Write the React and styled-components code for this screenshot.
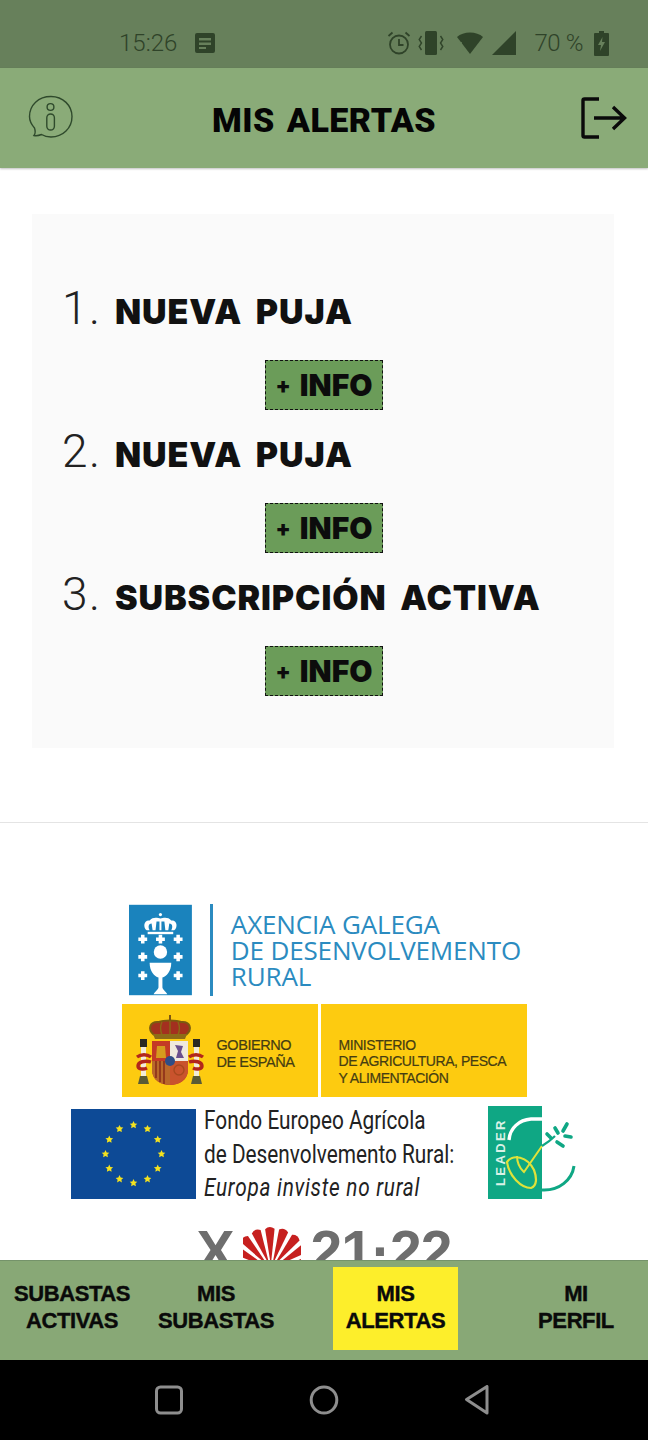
import React from 'react';
import styled, { createGlobalStyle } from 'styled-components';

const GlobalStyle = createGlobalStyle`
  html, body { margin: 0; padding: 0; background: #fff; }
  * { box-sizing: border-box; }
`;

const Screen = styled.div`
  width: 648px;
  height: 1440px;
  display: flex;
  flex-direction: column;
  overflow: hidden;
  font-family: "Roboto", "Liberation Sans", sans-serif;
`;

const StatusBar = styled.div`
  height: 68px;
  flex: none;
  background: #67805b;
  color: #2f4329;
  display: flex;
  align-items: center;
  padding: 18px 39px 0 119px;
`;
const StatusText = styled.span`
  font-size: 24px;
  font-weight: 300;
  line-height: 30px;
  letter-spacing: ${p => p.$spacing || 0};
  margin-left: ${p => p.$left || 0}px;
`;
const NoteIcon = styled.svg`
  margin-left: 17px;
`;
const StatusGlyph = styled.svg`
  flex: none;
  margin-left: ${p => p.$left || 0}px;
`;
const StatusIcons = styled.div`
  margin-left: auto;
  display: flex;
  align-items: center;
`;

const Header = styled.header`
  height: 100px;
  flex: none;
  background: #8aab78;
  box-shadow: 0 1px 2px rgba(0, 0, 0, 0.25);
  display: flex;
  align-items: center;
  justify-content: space-between;
  padding: 0 21px 0 28px;
  position: relative;
`;
const Title = styled.h1`
  margin: 4px 7px 0 0;
  font-family: "Roboto", sans-serif;
  font-size: 34px;
  font-weight: 900;
  color: #050505;
  letter-spacing: 0.5px;
  word-spacing: 3px;
`;

const Main = styled.main`
  flex: 1;
  min-height: 0;
  overflow: hidden;
  background: #fff;
  padding-top: 46px;
`;
const Panel = styled.ol`
  list-style: none;
  margin: 0 34px 0 32px;
  height: 534px;
  padding: 69px 29px 0 31px;
  background: #fafafa;
`;
const Alert = styled.li`
  height: 143px;
  display: flex;
  flex-direction: column;
`;
const AlertRow = styled.div`
  height: 56px;
  display: flex;
  align-items: center;
`;
const AlertNumber = styled.span`
  width: 53px;
  flex: none;
  margin: 0 0 6px -1px;
  font-family: "Roboto", sans-serif;
  font-size: 46px;
  font-weight: 300;
  letter-spacing: 1.5px;
  color: #222;
`;
const AlertLabel = styled.span`
  font-family: "Inter", sans-serif;
  font-size: 34px;
  font-weight: 900;
  color: #111;
  letter-spacing: 0.9px;
  word-spacing: 6px;
  white-space: nowrap;
`;
const InfoButton = styled.button`
  align-self: center;
  margin-top: 21px;
  width: 118px;
  height: 50px;
  padding: 0;
  border: 1.5px dashed #111;
  background: #6b9c59;
  color: #0c0c0c;
  font-family: "Inter", sans-serif;
  font-size: 30px;
  font-weight: 900;
  display: flex;
  align-items: center;
  justify-content: center;
  gap: 9px;
`;
const Plus = styled.span`
  font-size: 22px;
`;

const Divider = styled.hr`
  margin: 74px 0 0;
  border: 0;
  border-top: 1px solid #e4e4e4;
`;

const Logos = styled.section`
  margin-top: 81px;
  display: flex;
  flex-direction: column;
  align-items: center;
`;
const AgencyRow = styled.div`
  display: flex;
  align-items: stretch;
  height: 92px;
  width: 392px;
  margin-left: 2px;
`;
const AgencyRule = styled.div`
  width: 3px;
  margin: 0 18px;
  background: #2b8bc0;
`;
const AgencyName = styled.div`
  font-family: "Open Sans", sans-serif;
  font-size: 26px;
  line-height: 26px;
  letter-spacing: -0.15px;
  color: #2b8bc0;
  padding-top: 7px;
  white-space: nowrap;
`;
const GovRow = styled.div`
  margin-top: 8px;
  display: flex;
  gap: 3px;
  height: 93px;
`;
const GovBox = styled.div`
  width: ${p => p.$width}px;
  background: #fdcb10;
  display: flex;
  align-items: center;
  padding: ${p => p.$top || 0}px 0 0 ${p => p.$pad}px;
  color: #453d12;
  font-family: "Liberation Sans", sans-serif;
  font-size: ${p => p.$size}px;
  letter-spacing: ${p => p.$spacing}px;
  line-height: 16.5px;
  white-space: nowrap;
  -webkit-text-stroke: 0.2px #453d12;
`;
const GovCrest = styled.svg`
  margin: ${p => -(p.$lift || 0)}px 12px 0 0;
  flex: none;
`;
const FundRow = styled.div`
  margin-top: 9px;
  width: 506px;
  height: 94px;
  display: flex;
`;
const FlagMark = styled.svg`
  flex: none;
  margin-top: 3px;
`;
const FundText = styled.div`
  width: 251px;
  margin: -2px 0 0 8px;
  font-family: "Roboto", sans-serif;
  font-size: 26px;
  line-height: 33.5px;
  color: #222;
  white-space: nowrap;
  transform: scaleX(0.8);
  transform-origin: left top;
  em {
    font-style: italic;
    letter-spacing: 0.9px;
  }
`;
const Leader = styled.svg`
  margin-left: auto;
  flex: none;
`;
const XacobeoRow = styled.div`
  margin-top: 23px;
  display: flex;
  align-items: flex-start;
  font-family: "Liberation Sans", sans-serif;
  font-weight: 700;
  font-size: 57px;
  line-height: 57px;
  letter-spacing: -1px;
  color: #6e6e6e;
`;
const Shell = styled.svg`
  margin: 0 10px 0 9px;
`;

const Tabs = styled.nav`
  height: 100px;
  flex: none;
  background: #88a876;
  border-top: 1px solid #75936a;
  display: grid;
  grid-template-columns: 144px 144px 216px 144px;
`;
const Tab = styled.div`
  justify-self: center;
  align-self: start;
  margin: 6px ${p => (p.$active ? '1px' : '0')} 0 0;
  height: 83px;
  width: ${p => (p.$active ? '125px' : 'auto')};
  background: ${p => (p.$active ? '#fdee2b' : 'transparent')};
  display: flex;
  align-items: center;
  justify-content: center;
  text-align: center;
  font-family: "Liberation Sans", sans-serif;
  font-size: 22px;
  font-weight: 700;
  line-height: 27.5px;
  letter-spacing: -0.4px;
  color: #0a0a0a;
  -webkit-text-stroke: 0.4px #0a0a0a;
  padding-bottom: 3px;
`;

const SystemNav = styled.div`
  height: 80px;
  flex: none;
  background: #000;
  display: flex;
  align-items: center;
  justify-content: center;
  gap: 125px;
  padding-right: 4px;
`;

const InfoBubble = () => (
  <svg width="46" height="46" viewBox="0 0 46 46" fill="none" stroke="#2f4a2c" strokeWidth="1.4">
    <path d="M6 40.5 C8 38 7.5 36 6.5 33 C3 29 1.5 25 1.5 21.5 C1.5 10 10.5 1.5 23 1.5 C35 1.5 44 10.5 44 21.5 C44 33 35 42 23 42 C19 42 16 41 13.5 39.5 C11 40.5 8.5 41 6 40.5 Z" />
    <circle cx="22.5" cy="12" r="3.4" />
    <rect x="18.8" y="19" width="7.6" height="16" rx="3.8" />
  </svg>
);

const LogoutIcon = () => (
  <svg width="46" height="42" viewBox="0 0 46 42" fill="none" stroke="#0a0a0a" strokeWidth="3.4">
    <path d="M18 2 H3.5 Q2 2 2 3.5 V38.5 Q2 40 3.5 40 H18" />
    <path d="M13 21 H43 M32 10 L43.5 21 L32 32" />
  </svg>
);

const crossPoints = [[14, 35], [32, 35], [50, 35], [14, 53], [50, 53], [14, 72], [50, 72]];

const GaliciaEmblem = () => (
  <svg width="64" height="92" viewBox="0 0 64 92">
    <rect width="64" height="92" fill="#1a83bd" />
    <g fill="#fff">
      <circle cx="32" cy="10" r="1.6" />
      <path d="M18 26 C14 23 15 15 21 16 C24 12 29 13 32 14 C35 13 40 12 43 16 C49 15 50 23 46 26 H43 C45 22 44 19 41 19 L40 26 H37 L36 17 H33 V26 H31 V17 H28 L27 26 H24 L23 19 C20 19 19 22 21 26 Z" />
      <rect x="19" y="27.5" width="26" height="2.4" />
      {crossPoints.map(([x, y]) => (
        <path key={`${x}-${y}`} d={`M${x - 1.8} ${y - 4.5} h3.6 v2.7 h2.7 v3.6 h-2.7 v2.7 h-3.6 v-2.7 h-2.7 v-3.6 h2.7 Z`} />
      ))}
      <circle cx="32" cy="48" r="6.8" />
      <path d="M21 59 H43 C43 68 38 73 34 74 V84 C34 86 37 88 39 91 H25 C27 88 30 86 30 84 V74 C26 73 21 68 21 59 Z" />
    </g>
  </svg>
);

const SpainCrest = () => (
  <GovCrest $lift={4} width="70" height="74" viewBox="0 0 70 74">
    <path d="M35 0 V8" stroke="#6e4a12" strokeWidth="1.8" />
    <path d="M19 20 C12 14 15 6 24 7 C28 5 42 5 46 7 C55 6 58 14 51 20 Z" fill="#a3301f" />
    <path d="M19 20 C12 14 15 6 24 7 C28 5 42 5 46 7 C55 6 58 14 51 20" fill="none" stroke="#7a5a10" strokeWidth="2" />
    <path d="M27 7 C25 11 25 15 27 20 M43 7 C45 11 45 15 43 20 M35 6 V20" fill="none" stroke="#8a6a14" strokeWidth="1.4" />
    <path d="M18 19 H52 L50 24 H20 Z" fill="#8d6b17" />
    <rect x="5" y="24" width="7" height="8" fill="#2a2a22" />
    <rect x="58" y="24" width="7" height="8" fill="#2a2a22" />
    <rect x="6" y="32" width="5" height="29" fill="#f2ecd9" />
    <rect x="59" y="32" width="5" height="29" fill="#f2ecd9" />
    <path d="M3 69 L5 61 H12 L14 69 Z" fill="#5a5a36" />
    <path d="M56 69 L58 61 H65 L67 69 Z" fill="#5a5a36" />
    <path d="M2 42 C6 39 12 39 16 42 M16 47 C10 45 3 47 3 51 C3 54 8 55 12 53" fill="none" stroke="#b2261b" strokeWidth="3.4" />
    <path d="M68 42 C64 39 58 39 54 42 M54 47 C60 45 67 47 67 51 C67 54 62 55 58 53" fill="none" stroke="#b2261b" strokeWidth="3.4" />
    <path d="M17 26 H53 V55 C53 65 44 70 35 70 C26 70 17 65 17 55 Z" fill="#c43a25" />
    <rect x="35" y="26" width="18" height="20" fill="#efe9de" />
    <path d="M40 30 L48 31 L46 37 L49 43 L41 43 L43 36 Z" fill="#6a4f8e" />
    <path d="M22 31 H30 L31 43 H21 Z" fill="#d69c1e" />
    <path d="M17 46 H35 V70 C26 70 17 65 17 55 Z" fill="#b9682a" />
    <path d="M21 46 V63 M25 46 V67 M29 46 V69" stroke="#8c2f1a" strokeWidth="1.6" />
    <path d="M35 46 H53 V55 C53 64 44 70 35 70 Z" fill="#c9532d" />
    <circle cx="44" cy="55" r="5" fill="none" stroke="#a8481e" strokeWidth="1.4" />
    <circle cx="35" cy="46" r="5" fill="#2f4d86" />
  </GovCrest>
);

const euStars = Array.from({ length: 12 }, (_, i) => {
  const a = (i * Math.PI) / 6;
  return [62.5 + 28 * Math.sin(a), 45 - 29 * Math.cos(a)];
});

const starPath = (cx, cy, r) => {
  const pts = [];
  for (let i = 0; i < 10; i++) {
    const a = (i * Math.PI) / 5;
    const d = i % 2 ? r * 0.5 : r;
    pts.push(`${(cx + d * Math.sin(a)).toFixed(1)},${(cy - d * Math.cos(a)).toFixed(1)}`);
  }
  return pts.join(' ');
};

const EuFlag = () => (
  <FlagMark width="125" height="90" viewBox="0 0 125 90">
    <rect width="125" height="90" fill="#0d4a96" />
    {euStars.map(([x, y], i) => (
      <polygon key={i} points={starPath(x, y, 4)} fill="#f4e21f" />
    ))}
  </FlagMark>
);

const LeaderLogo = () => (
  <Leader width="90" height="94" viewBox="0 0 90 94" fill="none">
    <rect x="1" y="0" width="54" height="93" fill="#0fa784" />
    <text x="0" y="0" transform="translate(18 80) rotate(-90)" fill="#d9f2e7" fontFamily="Liberation Sans, sans-serif" fontSize="13" fontWeight="700" letterSpacing="2.4">LEADER</text>
    <path d="M22 34 C23 22 32 14 44 13 H55" stroke="#fff" strokeWidth="3.4" />
    <path d="M55 84 C72 85 85 74 87 60" stroke="#0fa784" strokeWidth="3" />
    <path d="M20 56 C26 48 40 50 47 64 C50 72 50 80 44 82 C34 82 22 70 20 56 Z" stroke="#dfe23a" strokeWidth="2.2" />
    <path d="M30 50 C30 60 35 64 37 66 L55 40" stroke="#dfe23a" strokeWidth="2" />
    <path d="M55 40 C60 37 64 34 68 30" stroke="#0fa784" strokeWidth="2.2" />
    <path d="M60 28 L64 32 M68 22 L71 27 M80 18 L76 25 M70 36 L76 40 M78 30 L84 31" stroke="#0fa784" strokeWidth="3.6" strokeLinecap="round" />
  </Leader>
);

const shellRays = [-62, -42, -22, -2, 18, 38, 58, 78];

const ShellMark = () => (
  <Shell width="58" height="40" viewBox="0 0 58 40">
    {shellRays.map(a => (
      <path key={a} d="M28 42 L23.5 6 Q28 2 33 6 Z" transform={`rotate(${a} 28 46)`} fill="#c6201f" />
    ))}
  </Shell>
);

const SquareKey = () => (
  <svg width="30" height="30" viewBox="0 0 30 30" fill="none" stroke="#8e8e8e" strokeWidth="3">
    <rect x="2.5" y="2" width="25" height="26" rx="4" />
  </svg>
);
const CircleKey = () => (
  <svg width="30" height="30" viewBox="0 0 30 30" fill="none" stroke="#8e8e8e" strokeWidth="3">
    <ellipse cx="15" cy="15" rx="12.8" ry="13" />
  </svg>
);
const BackKey = () => (
  <svg width="26" height="30" viewBox="0 0 26 30" fill="none" stroke="#8e8e8e" strokeWidth="3" strokeLinejoin="round">
    <path d="M23 1.5 V28 L2.5 14.5 Z" />
  </svg>
);

const alerts = [
  { id: 1, label: 'NUEVA PUJA' },
  { id: 2, label: 'NUEVA PUJA' },
  { id: 3, label: 'SUBSCRIPCIÓN ACTIVA' },
];

const tabs = [
  { top: 'SUBASTAS', bottom: 'ACTIVAS' },
  { top: 'MIS', bottom: 'SUBASTAS' },
  { top: 'MIS', bottom: 'ALERTAS', active: true },
  { top: 'MI', bottom: 'PERFIL' },
];

export default function App() {
  return (
    <Screen>
      <GlobalStyle />
      <StatusBar>
        <StatusText>15:26</StatusText>
        <NoteIcon width="22" height="20" viewBox="0 0 22 20" fill="#2f4329">
          <path d="M1 2 Q1 0 3 0 H19 Q21 0 21 2 V18 Q21 20 19 20 H3 Q1 20 1 18 Z M5 5 V7.5 H17 V5 Z M5 9.5 V12 H17 V9.5 Z M5 14 V16 H12 V14 Z" fillRule="evenodd" />
        </NoteIcon>
        <StatusIcons>
          <StatusGlyph width="24" height="24" viewBox="0 0 24 24" fill="none" stroke="#2f4329" strokeWidth="1.8">
            <circle cx="12" cy="13.5" r="9" />
            <path d="M12 8 V14 H16.5" />
            <path d="M1.5 5 L5.5 1.5 M22.5 5 L18.5 1.5" />
          </StatusGlyph>
          <StatusGlyph $left={7} width="26" height="24" viewBox="0 0 26 24" fill="#2f4329">
            <rect x="7" y="0" width="12" height="24" rx="1.5" />
            <path d="M3.5 5 L1.2 8.5 L3.5 12 L1.2 15.5 L3.5 19 M22.5 5 L24.8 8.5 L22.5 12 L24.8 15.5 L22.5 19" fill="none" stroke="#2f4329" strokeWidth="1.4" />
          </StatusGlyph>
          <StatusGlyph $left={13} width="26" height="22" viewBox="0 0 26 22" fill="#2f4329">
            <path d="M0 5 C6 -1 20 -1 26 5 L13 22 Z" />
            <path d="M1.5 11 H5 M3 14.5 H6 M5 18 H7" stroke="#67805b" strokeWidth="1.4" />
          </StatusGlyph>
          <StatusGlyph $left={9} width="24" height="24" viewBox="0 0 24 24" fill="#2f4329">
            <path d="M24 0 V24 H0 Z" />
          </StatusGlyph>
          <StatusText $left={18} $spacing="-0.4px">70 %</StatusText>
          <StatusGlyph $left={11} width="15" height="25" viewBox="0 0 15 25" fill="#2f4329">
            <path d="M5 0 H10 V2 H14 Q15 2 15 3 V24 Q15 25 14 25 H1 Q0 25 0 24 V3 Q0 2 1 2 H5 Z" />
            <path d="M8.5 6 L4 14 H7 L6 20 L11 11 H8 Z" fill="#67805b" />
          </StatusGlyph>
        </StatusIcons>
      </StatusBar>

      <Header>
        <InfoBubble />
        <Title>MIS ALERTAS</Title>
        <LogoutIcon />
      </Header>

      <Main>
        <Panel>
          {alerts.map(alert => (
            <Alert key={alert.id}>
              <AlertRow>
                <AlertNumber>{alert.id}.</AlertNumber>
                <AlertLabel>{alert.label}</AlertLabel>
              </AlertRow>
              <InfoButton>
                <Plus>+</Plus>
                INFO
              </InfoButton>
            </Alert>
          ))}
        </Panel>
        <Divider />
        <Logos>
          <AgencyRow>
            <GaliciaEmblem />
            <AgencyRule />
            <AgencyName>
              AXENCIA GALEGA
              <br />
              DE DESENVOLVEMENTO
              <br />
              RURAL
            </AgencyName>
          </AgencyRow>
          <GovRow>
            <GovBox $width={196} $pad={13} $size={14.5} $spacing={-0.45} $top={6}>
              <SpainCrest />
              <div>
                GOBIERNO
                <br />
                DE ESPAÑA
              </div>
            </GovBox>
            <GovBox $width={206} $pad={18} $size={14} $spacing={-0.45} $top={22}>
              <div>
                MINISTERIO
                <br />
                DE AGRICULTURA, PESCA
                <br />
                Y ALIMENTACIÓN
              </div>
            </GovBox>
          </GovRow>
          <FundRow>
            <EuFlag />
            <FundText>
              Fondo Europeo Agrícola
              <br />
              de Desenvolvemento Rural:
              <br />
              <em>Europa inviste no rural</em>
            </FundText>
            <LeaderLogo />
          </FundRow>
          <XacobeoRow>
            X
            <ShellMark />
            21·22
          </XacobeoRow>
        </Logos>
      </Main>

      <Tabs>
        {tabs.map(tab => (
          <Tab key={tab.top + tab.bottom} $active={tab.active}>
            <div>
              {tab.top}
              <br />
              {tab.bottom}
            </div>
          </Tab>
        ))}
      </Tabs>

      <SystemNav>
        <SquareKey />
        <CircleKey />
        <BackKey />
      </SystemNav>
    </Screen>
  );
}
